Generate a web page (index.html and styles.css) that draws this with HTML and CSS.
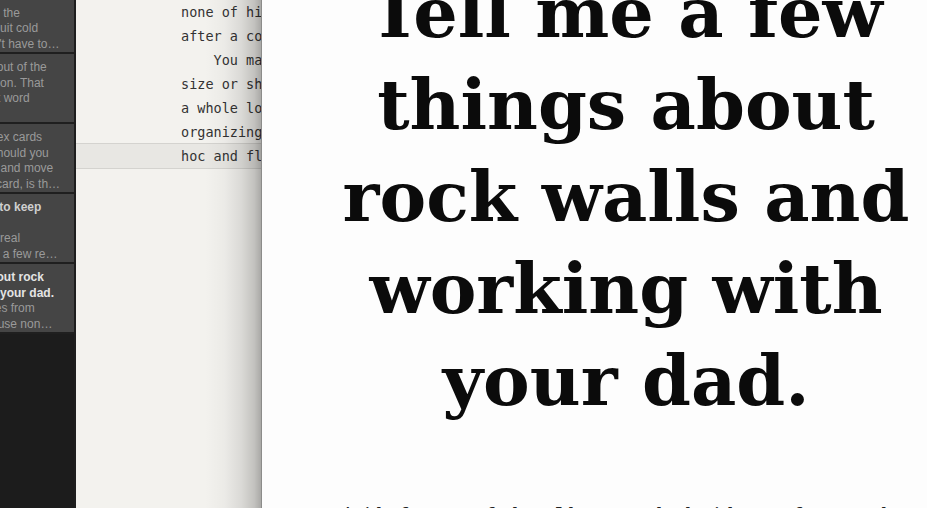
FILE: index.html
```html
<!DOCTYPE html>
<html lang="en">
<head>
<meta charset="utf-8">
<title>Notes</title>
<link rel="stylesheet" href="styles.css">
</head>
<body>
<div class="app">
  <aside class="notes">
    <div class="list">
      <div class="card">
        <div class="title">Stone walls</div>
        <div class="ex">We built stone walls in all the</div>
        <div class="ex">summers. Father never quit cold</div>
        <div class="ex">winter days. We just didn't have to…</div>
      </div>
      <div class="card">
        <div class="ex">Dad and I dug the rocks out of the</div>
        <div class="ex">old stone church foundation. That</div>
        <div class="ex">was always my dad's last word</div>
      </div>
      <div class="card">
        <div class="ex">Grab a fresh stack of index cards</div>
        <div class="ex">Jot one note to a card. Should you</div>
        <div class="ex">shuffle them about freely and move</div>
        <div class="ex">the idea over to another card, is th…</div>
      </div>
      <div class="card">
        <div class="title">Deciding which stones to keep</div>
        <div class="title">and which to toss</div>
        <div class="ex">Not every single stone is real</div>
        <div class="ex">useful wall material. Only a few re…</div>
      </div>
      <div class="card selected">
        <div class="title">Tell me a few things about rock</div>
        <div class="title">walls and working with your dad.</div>
        <div class="ex">A few notes and memories from</div>
        <div class="ex">my years growing up. I'll use non…</div>
      </div>
    </div>
  </aside>

  <main class="editor">
    <div class="ln">none of his walls ever fell, not even</div>
    <div class="ln">after a couple of hard winters.</div>
    <div class="ln">    You may want to sort the stones by</div>
    <div class="ln">size or shape first. You don't need</div>
    <div class="ln">a whole lot of planning, just some</div>
    <div class="ln">organizing. Most of the work is ad</div>
    <div class="ln current">hoc and flexible, and that's fine.</div>
  </main>

  <section class="preview">
    <h1 class="headline">Tell me a few things about rock walls and working with your dad.</h1>
    <p class="body-text">Aside from my father, I have worked with very few people who could build a dry stone wall that would still be standing after a long hard winter.</p>
  </section>
</div>
</body>
</html>
```
FILE: styles.css
```css
html, body {
  margin: 0;
  height: 508px;
  overflow: hidden;
  background: #1c1c1c;
}

.app {
  display: flex;
  height: 508px;
  margin-left: -146px;
  position: relative;
}

/* notes list (scrolled partly off screen) */
.notes {
  flex: 0 0 220px;
  border-right: 2px solid #1e1e1e;
  background: #1c1c1c;
  overflow: hidden;
  font-family: "Liberation Sans", Arial, sans-serif;
  font-size: 12px;
  line-height: 15.5px;
}

.list {
  margin-top: -16px;
}

.card {
  box-sizing: border-box;
  height: 70px;
  padding: 6px 12px 0;
  background: #454545;
  border-bottom: 2px solid #1f1f1f;
  white-space: nowrap;
  overflow: hidden;
}

.title {
  font-weight: bold;
  color: #cfcfcf;
}

.selected .title {
  color: #e4e4e4;
}

.ex {
  color: #9a9a9a;
}

/* editor */
.editor {
  flex: 1;
  background: #f3f2ee;
  color: #333;
  font-family: "DejaVu Sans Mono", monospace;
  font-size: 13.5px;
  line-height: 24px;
  overflow: hidden;
}

.ln {
  padding-left: 105px;
  height: 24px;
  white-space: pre;
}

.ln.current {
  background: #e8e7e3;
  border-top: 1px solid #d4d3cf;
  border-bottom: 1px solid #d4d3cf;
  margin: -1px 0;
}

/* preview sheet sliding over the editor */
.preview {
  position: absolute;
  top: 0;
  left: 407px;
  width: 728px;
  height: 100%;
  background: #fdfdfd;
  border-left: 1px solid #8c8c8a;
}

.preview::before {
  content: "";
  position: absolute;
  top: 0;
  bottom: 0;
  right: calc(100% + 1px);
  width: 56px;
  background: linear-gradient(to right,
    rgba(0, 0, 0, 0) 0%,
    rgba(0, 0, 0, 0.03) 35%,
    rgba(0, 0, 0, 0.1) 65%,
    rgba(0, 0, 0, 0.2) 88%,
    rgba(0, 0, 0, 0.3) 100%);
}

.headline {
  width: 610px;
  margin: -33px auto 0;
  text-align: center;
  font-family: Georgia, "DejaVu Serif", serif;
  font-weight: bold;
  font-size: 70px;
  line-height: 92px;
  color: #0b0b0b;
}

.body-text {
  width: 570px;
  margin: 72px auto 0;
  font-family: Georgia, "DejaVu Serif", serif;
  font-size: 19px;
  line-height: 30px;
  color: #222;
}
```
